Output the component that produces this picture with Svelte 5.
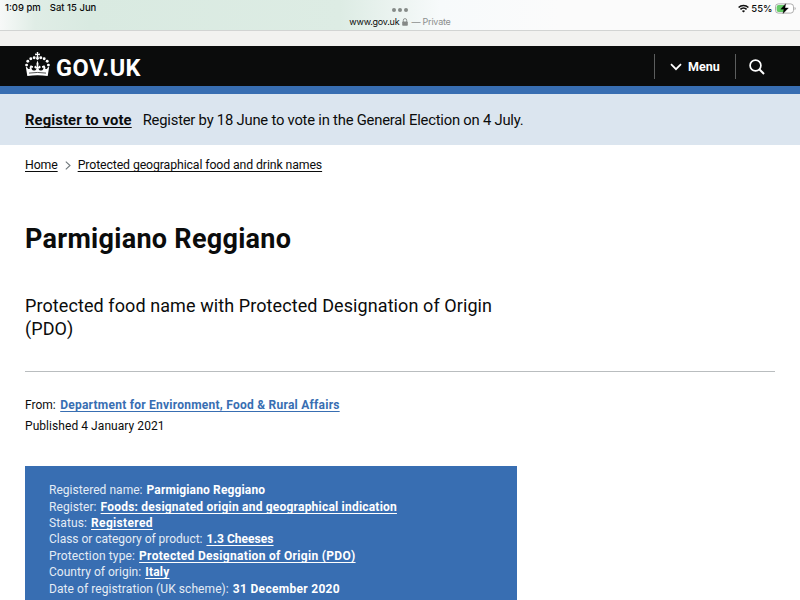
<script lang="ts">
  type Row = { label: string; value: string; link?: boolean; spacing: number; labelSpacing: number };

  const rows: Row[] = [
    { label: 'Registered name:', value: 'Parmigiano Reggiano', spacing: 0.14, labelSpacing: 0.04 },
    { label: 'Register:', value: 'Foods: designated origin and geographical indication', link: true, spacing: 0.21, labelSpacing: 0.08 },
    { label: 'Status:', value: 'Registered', link: true, spacing: 0.33, labelSpacing: 0.12 },
    { label: 'Class or category of product:', value: '1.3 Cheeses', link: true, spacing: 0.05, labelSpacing: -0.02 },
    { label: 'Protection type:', value: 'Protected Designation of Origin (PDO)', link: true, spacing: 0.31, labelSpacing: 0.14 },
    { label: 'Country of origin:', value: 'Italy', link: true, spacing: 0.2, labelSpacing: 0.03 },
    { label: 'Date of registration (UK scheme):', value: '31 December 2020', spacing: 0.3, labelSpacing: 0.08 },
  ];

  // pearls along the arches of the crown
  const pearls = [
    [1.6, 13.1], [2.8, 9.2], [5.8, 6.7], [9.2, 5.8],
    [15.8, 5.8], [19.2, 6.7], [22.2, 9.2], [23.4, 13.1],
  ];
</script>

<div class="screen">
  <div class="browser">
    <div class="clock"><span>1:09 pm</span><span>Sat 15 Jun</span></div>
    <div class="tab">
      <div class="dots"><i></i><i></i><i></i></div>
      <div class="address">
        <span class="host">www.gov.uk</span>
        <svg width="6" height="8" viewBox="0 0 6 8">
          <path d="M1.3 4V2.3a1.7 1.7 0 0 1 3.4 0V4" fill="none" stroke="#858987" stroke-width="0.9" />
          <rect x="0.2" y="3.4" width="5.6" height="4.4" rx="0.8" fill="#858987" />
        </svg>
        <span class="private">— Private</span>
      </div>
    </div>
    <div class="status">
      <svg width="11" height="9" viewBox="0 0 11 9" fill="none" stroke="#111" stroke-width="1.6">
        <path d="M0.6 3.5a7 7 0 0 1 9.8 0" />
        <path d="M2.4 5.4a4.4 4.4 0 0 1 6.2 0" />
        <path d="M5.5 8.6 3.9 7a2.3 2.3 0 0 1 3.2 0z" fill="#111" stroke="none" />
      </svg>
      <span>55%</span>
      <svg width="21" height="11" viewBox="0 0 21 11">
        <rect x="0.5" y="0.9" width="18" height="9.2" rx="2.8" fill="#fff" stroke="#a5a5a5" stroke-width="0.9" />
        <path d="M3.6 2.1H9v6.8H3.6a2 2 0 0 1-2-2V4.1a2 2 0 0 1 2-2z" fill="#65cb67" />
        <path d="M19.6 4v3.2q1-.4 1-1.6t-1-1.6z" fill="#a5a5a5" />
        <path d="M10.7.7 5.7 6.2h3.2L8 10.6 13.4 4.9H10z" fill="#000" stroke="#000" stroke-width="0.3" />
      </svg>
    </div>
  </div>
  <div class="toolbar-gap"></div>

  <header>
    <div class="logo">
      <svg width="25" height="25" viewBox="0 0 25 25" fill="#fff">
        {#each pearls as [cx, cy]}
          <circle {cx} {cy} r="1.45" />
        {/each}
        <path d="M11.7 0h1.6l-.3 1.8 1.9-.3v1.8L13 3l.5 2.2a1.5 1.5 0 1 1-2 0L12 3l-1.9.3V1.5l1.9.3z" />
        <path d="M12.5 8.4l1 3.2-.3 3.4 1.6-1.4 1 1.6-1.2 1.2-1.1-.2c.2 1.6 1.3 2.6 2.9 2.3 1.5-.2 2.3-1.6 2-3.1l-1.1.5-.4-1.6 2.4-1 1.2 2.1-.6.9c.7 1.5 2.7.7 2.8-.7l1.5-.8-1.5 9.3q-10.2-1.5-20.4 0L.8 14.8l1.5.8c.1 1.4 2.1 2.2 2.8.7l-.6-.9 1.2-2.1 2.4 1-.4 1.6-1.1-.5c-.3 1.5.5 2.9 2 3.1 1.6.3 2.7-.7 2.9-2.3l-1.1.2-1.2-1.2 1-1.6 1.6 1.4-.3-3.4z" />
        <path d="M4 21.1q8.5-1.3 17 0" fill="none" stroke="#0b0c0c" stroke-width="0.7" />
      </svg>
      <span>GOV.UK</span>
    </div>
    <nav>
      <div class="menu">
        <svg width="12" height="8" viewBox="0 0 12 8" fill="none" stroke="#fff" stroke-width="1.7">
          <path d="M1 1.2l5 5 5-5" />
        </svg>
        <span>Menu</span>
      </div>
      <div class="search">
        <svg width="16" height="16" viewBox="0 0 16 16" fill="none" stroke="#fff" stroke-width="1.7">
          <circle cx="6.5" cy="6.5" r="5.4" />
          <path d="M10.3 10.3l4.7 4.7" stroke-width="2" />
        </svg>
      </div>
    </nav>
  </header>
  <div class="blue-bar"></div>

  <div class="banner">
    <a href="#vote">Register to vote</a>
    <span>Register by 18 June to vote in the General Election on 4 July.</span>
  </div>

  <main>
    <div class="breadcrumbs">
      <a class="home" href="#home">Home</a>
      <svg width="6" height="9" viewBox="0 0 6 9" fill="none" stroke="#6f777b" stroke-width="1.1">
        <path d="M0.8 0.6l4.2 3.9-4.2 3.9" />
      </svg>
      <a class="names" href="#names">Protected geographical food and drink names</a>
    </div>

    <h1>Parmigiano Reggiano</h1>
    <p class="lede">Protected food name with Protected Designation of Origin<br />(PDO)</p>
    <hr />

    <div class="meta">
      <div>
        <span>From:</span>
        <a href="#defra">Department for Environment, Food &amp; Rural Affairs</a>
      </div>
      <div class="published">Published 4 January 2021</div>
    </div>

    <dl>
      {#each rows as row}
        <div class="row">
          <dt style="letter-spacing: {row.labelSpacing}px">{row.label}</dt>
          <dd class:link={row.link} style="letter-spacing: {row.spacing}px">{row.value}</dd>
        </div>
      {/each}
    </dl>
  </main>
</div>

<style>
  :global(body) {
    margin: 0;
    overflow: hidden;
  }

  .screen {
    height: 600px;
    overflow: hidden;
    background: #fff;
    color: #0b0c0c;
    font-family: Roboto, 'Liberation Sans', sans-serif;
    white-space: nowrap;
  }

  a {
    color: inherit;
    text-decoration: underline;
    text-decoration-thickness: 1px;
    text-decoration-skip-ink: none;
    text-underline-offset: 2px;
  }

  .browser {
    display: grid;
    grid-template-columns: 1fr auto 1fr;
    height: 30px;
    box-sizing: border-box;
    padding: 0 5px;
    background: linear-gradient(90deg, #f7f9f8 0, #e0ede6 35px, #d9eae1 90px, #ddece4 340px, #f7fafb 440px, #fbfbfb 560px);
    font-family: Inter, sans-serif;
    font-size: 9.5px;
  }

  .clock {
    display: flex;
    gap: 9px;
    line-height: 16px;
    font-weight: 500;
  }

  .tab {
    display: flex;
    flex-direction: column;
    align-items: center;
  }

  .dots {
    display: flex;
    gap: 2px;
    margin-top: 8px;
  }

  .dots i {
    width: 4px;
    height: 4px;
    border-radius: 50%;
    background: #858b88;
  }

  .address {
    display: flex;
    align-items: center;
    gap: 3px;
    margin-top: 3px;
    font-size: 9px;
    letter-spacing: -0.22px;
    line-height: 13px;
  }

  .private {
    color: #8b8e8d;
  }

  .status {
    display: flex;
    justify-content: flex-end;
    align-items: center;
    gap: 2.5px;
    height: 16px;
    margin-right: -1px;
    font-weight: 500;
  }

  .toolbar-gap {
    height: 16px;
    box-sizing: border-box;
    border-top: 1px solid #d2d4d3;
    background: #f2f2f0;
  }

  header {
    display: flex;
    justify-content: space-between;
    height: 40px;
    padding: 0 25px;
    background: #0b0c0c;
    color: #fff;
  }

  .logo {
    display: flex;
    align-items: center;
    gap: 6px;
    font-size: 23.5px;
    font-weight: 700;
    letter-spacing: 0.5px;
  }

  .logo svg {
    margin-top: -3px;
  }

  .logo span {
    padding-top: 3px;
  }

  nav {
    display: flex;
    height: 25px;
    padding-top: 8px;
  }

  .menu {
    display: flex;
    align-items: center;
    gap: 6px;
    width: 80px;
    box-sizing: border-box;
    padding-left: 15px;
    border-left: 1px solid #5c5e5e;
    font-size: 12.5px;
    font-weight: 700;
  }

  .search {
    display: flex;
    align-items: center;
    width: 40px;
    box-sizing: border-box;
    margin-left: 1px;
    padding-left: 12.5px;
    border-left: 1px solid #5c5e5e;
  }

  .blue-bar {
    height: 8px;
    background: #386eb2;
  }

  .banner {
    display: flex;
    gap: 11px;
    height: 51px;
    padding: 0 25px;
    background: #dbe5ef;
    font-size: 14.8px;
    letter-spacing: -0.22px;
    line-height: 53px;
  }

  .banner a {
    font-weight: 700;
    letter-spacing: 0.1px;
  }

  main {
    padding: 0 25px;
  }

  .breadcrumbs {
    display: flex;
    align-items: center;
    gap: 7px;
    padding-top: 12px;
    font-size: 12.3px;
    line-height: 17px;
    letter-spacing: -0.11px;
  }

  h1 {
    margin: 48px 0 0;
    font-size: 27px;
    line-height: 34px;
    font-weight: 700;
    letter-spacing: 0.28px;
  }

  .lede {
    margin: 38px 0 0;
    font-size: 18px;
    line-height: 23.4px;
    letter-spacing: 0.09px;
  }

  hr {
    height: 1px;
    margin: 30px 0 0;
    border: 0;
    background: #b9bdbf;
  }

  .meta {
    margin-top: 23px;
    font-size: 12px;
    line-height: 21px;
  }

  .meta div {
    display: flex;
    gap: 4.5px;
  }

  .meta a {
    color: #386eb2;
    font-weight: 700;
    letter-spacing: 0.24px;
  }

  .meta .published {
    letter-spacing: 0.06px;
  }

  dl {
    width: 492px;
    height: 134px;
    box-sizing: border-box;
    margin: 29px 0 0;
    padding: 16.4px 24px 0;
    background: #386eb2;
    color: #fff;
    font-size: 12px;
    line-height: 16.4px;
    overflow: hidden;
  }

  .row {
    display: flex;
    gap: 4px;
  }

  dt {
    color: #e4ecf5;
  }

  dd {
    margin: 0;
    font-weight: 700;
  }

  .link {
    text-decoration: underline;
    text-decoration-thickness: 1px;
    text-decoration-skip-ink: none;
    text-underline-offset: 2px;
  }
</style>
